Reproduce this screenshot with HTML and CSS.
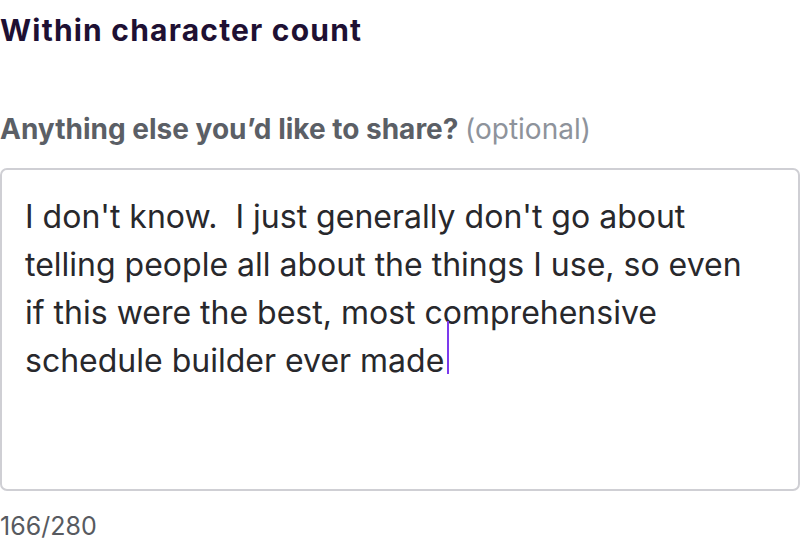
FILE: index.html
```html
<!DOCTYPE html>
<html>
<head>
<meta charset="utf-8">
<link rel="stylesheet" href="styles.css">
</head>
<body>
<main class="page">
  <h2 class="title">Within character count</h2>
  <div class="field">
    <label class="label">Anything else you’d like to share? <span class="optional">(optional)</span></label>
    <div class="textbox" role="textbox">I don't know.  I just generally don't go about<br>telling people all about the things I use, so even<br>if this were the best, most comprehensive<br>schedule builder ever made<span class="caret"></span></div>
    <div class="counter">166/280</div>
  </div>
</main>
</body>
</html>
```
FILE: styles.css
```css
html, body {
  margin: 0;
  padding: 0;
  background: #ffffff;
}
.page {
  font-family: Inter, "Liberation Sans", sans-serif;
}
.title {
  margin: 0;
  padding-top: 12px;
  font-size: 30px;
  font-weight: 700;
  letter-spacing: 1.2px;
  line-height: 36px;
  color: #1e1033;
}
.field {
  margin-top: 64px;
  display: flex;
  flex-direction: column;
}
.label {
  font-size: 28px;
  font-weight: 700;
  line-height: 34px;
  color: #5b5f66;
}
.optional {
  font-weight: 400;
  color: #8e939b;
}
.textbox {
  margin-top: 22px;
  box-sizing: border-box;
  width: 800px;
  height: 323px;
  border: 2px solid #cfcfd4;
  border-radius: 7px;
  padding: 23px 23px;
  font-size: 32px;
  line-height: 48px;
  color: #28282c;
  white-space: pre-wrap;
}
.caret {
  display: inline-block;
  width: 2px;
  height: 53px;
  margin-top: -24px;
  background: #7c3aed;
  vertical-align: -2px;
  margin-left: 3px;
}
.counter {
  margin-top: 20px;
  font-size: 25px;
  line-height: 30px;
  color: #575a60;
}
```
